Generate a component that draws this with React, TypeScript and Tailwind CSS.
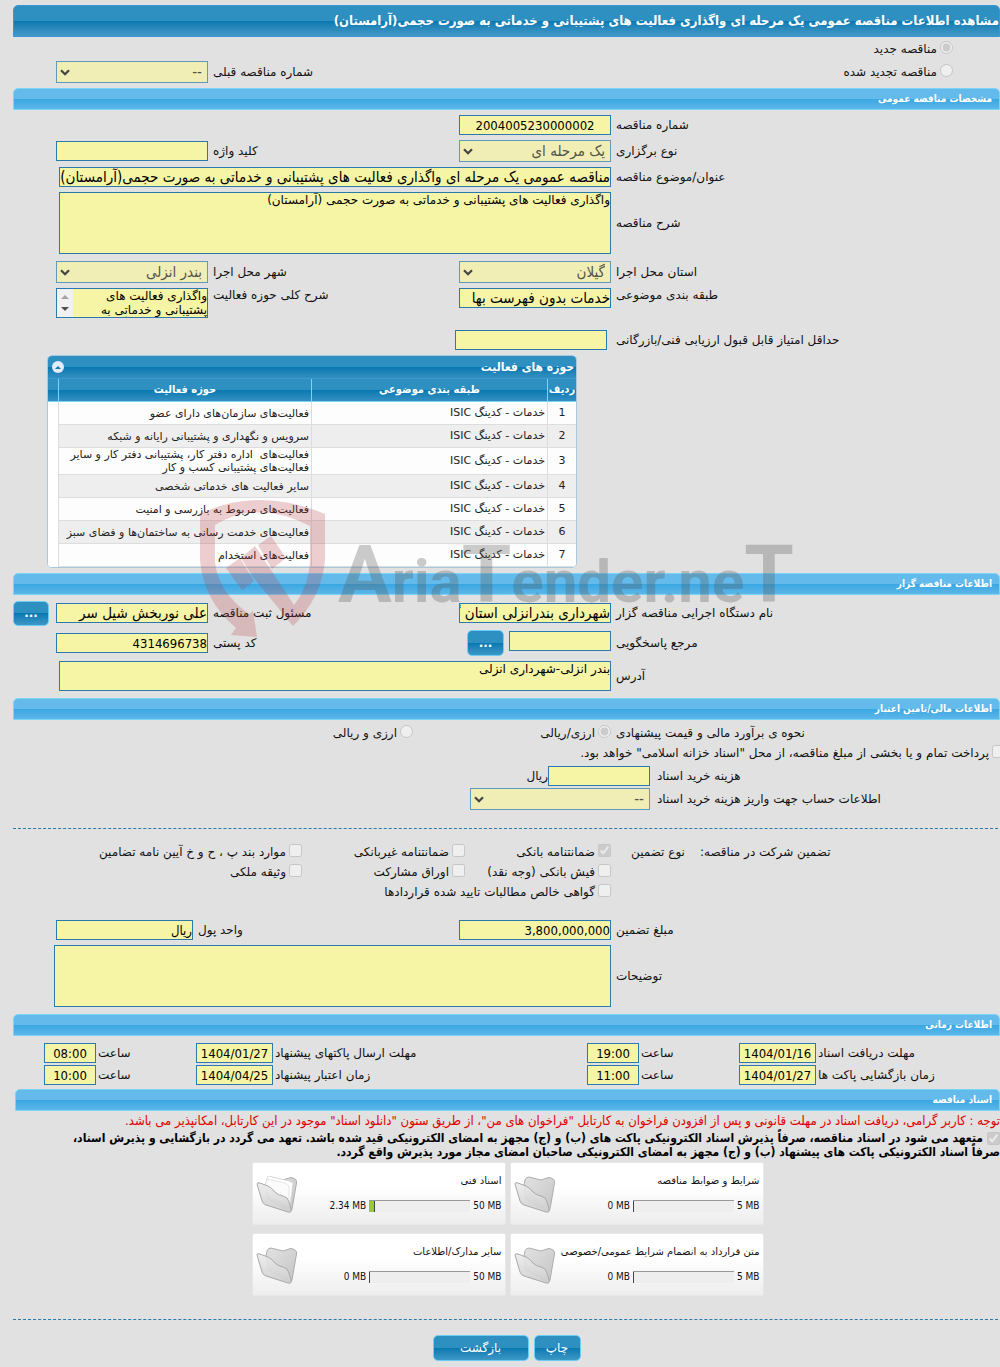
import { type ReactNode } from "react";
import clsx from "clsx";

const fieldBase = "block border border-[#2a7aab] bg-[#f6f4a5] text-black outline-none";

const formGrid = "grid grid-cols-[389fr_152px_251fr_152px_43px] items-center";

const timeGrid =
  "grid grid-cols-[184fr_77px_100px_52px_314fr_77px_100px_52px_31px] items-center";

const condensed = "font-['DejaVu_Sans_Condensed','DejaVu_Sans',sans-serif]";

const activities = [
  "فعالیت‌های سازمان‌های دارای عضو",
  "سرویس و نگهداری و پشتیبانی رایانه و شبکه",
  "فعالیت‌های  اداره دفتر کار، پشتیبانی دفتر کار و سایر فعالیت‌های پشتیبانی کسب و کار",
  "سایر فعالیت های خدماتی شخصی",
  "فعالیت‌های مربوط به بازرسی و امنیت",
  "فعالیت‌های خدمت رسانی به ساختمان‌ها و فضای سبز",
  "فعالیت‌های استخدام",
];

const times = [
  [
    { id: "docs", label: "مهلت دریافت اسناد", date: "1404/01/16", hour: "19:00" },
    { id: "send", label: "مهلت ارسال پاکتهای پیشنهاد", date: "1404/01/27", hour: "08:00" },
  ],
  [
    { id: "open", label: "زمان بازگشایی پاکت ها", date: "1404/01/27", hour: "11:00" },
    { id: "valid", label: "زمان اعتبار پیشنهاد", date: "1404/04/25", hour: "10:00" },
  ],
];

const folders = [
  { title: "شرایط و ضوابط مناقصه", used: 0, max: 5, full: false },
  { title: "اسناد فنی", used: 2.34, max: 50, full: true },
  { title: "متن قرارداد به انضمام شرایط عمومی/خصوصی", used: 0, max: 5, full: false },
  { title: "سایر مدارک/اطلاعات", used: 0, max: 50, full: false },
];

function Label({
  htmlFor,
  children,
  className = "pe-[5px]",
}: {
  htmlFor?: string;
  children: ReactNode;
  className?: string;
}) {
  return (
    <label htmlFor={htmlFor} className={clsx("block text-end whitespace-nowrap", className)}>
      {children}
    </label>
  );
}

function TextField({
  id,
  value = "",
  width = "w-full",
  size = "text-[13px]",
  className,
}: {
  id: string;
  value?: string;
  width?: string;
  size?: string;
  className?: string;
}) {
  return (
    <input
      id={id}
      type="text"
      readOnly
      value={value}
      className={clsx(fieldBase, condensed, "h-5", width, size, className)}
    />
  );
}

function SelectField({ id, value, className }: { id: string; value: string; className?: string }) {
  return (
    <div className={clsx("relative", className)}>
      <select
        id={id}
        disabled
        className={clsx(
          condensed,
          "block h-[22px] w-full appearance-none border border-[#5f9abb] bg-[#f0eeb4] ps-[5px] text-[15px] leading-5 text-[#54544a] opacity-100",
        )}
      >
        <option>{value}</option>
      </select>
      <svg viewBox="0 0 10 7" className="pointer-events-none absolute top-2 left-1 h-[7px] w-[10px]">
        <path d="M1 1.2 5 5.2 9 1.2" fill="none" stroke="#444" strokeWidth="2.2" />
      </svg>
    </div>
  );
}

function SectionBar({ children, className }: { children: ReactNode; className?: string }) {
  return (
    <h2
      className={clsx(
        condensed,
        "h-[22px] rounded-t-[5px] border border-[#7bd3f6] bg-linear-to-b from-[#64bbeb] from-50% via-[#38a7e2] via-50% to-[#5cb6e9] ps-[7px] text-[10px] leading-5 font-bold text-white",
        className,
      )}
    >
      {children}
    </h2>
  );
}

function BlueButton({ children, className }: { children: ReactNode; className?: string }) {
  return (
    <button
      type="button"
      className={clsx(
        "rounded-[5px] border border-[#6bcdf5] bg-linear-to-b from-[#2e90c0] from-50% via-[#0478b1] via-50% to-[#3b98c6] text-white",
        className,
      )}
    >
      {children}
    </button>
  );
}

function Divider({ className }: { className?: string }) {
  return <div role="separator" className={clsx("ms-[2px] border-t border-dashed border-[#2a7aab]", className)} />;
}

function Choice({
  type,
  name,
  checked = false,
  children,
  className,
}: {
  type: "radio" | "checkbox";
  name: string;
  checked?: boolean;
  children: ReactNode;
  className?: string;
}) {
  return (
    <label className={clsx("flex items-center gap-[3px] whitespace-nowrap", className)}>
      <input type={type} name={name} checked={checked} disabled readOnly className="mb-1 size-[13px] shrink-0" />
      {children}
    </label>
  );
}

function FolderIcon({ full }: { full: boolean }) {
  return (
    <svg viewBox="0 0 42 42" className="h-[42px] w-[42px]">
      <defs>
        <linearGradient id="folderBack" x1="0" y1="0" x2="1" y2="1">
          <stop offset="0" stopColor="#e2e2e2" />
          <stop offset="1" stopColor="#c4c4c4" />
        </linearGradient>
        <linearGradient id="folderFront" x1="0" y1="0" x2="0" y2="1">
          <stop offset="0" stopColor="#ececec" />
          <stop offset="1" stopColor="#cdcdcd" />
        </linearGradient>
      </defs>
      <path
        d="M10 14 11 9Q12 6 15 6L27 9 33 7Q35 6 37 7L39 8Q41 9 40.500 12L36 38Q35 41 33 40L12 28Z"
        fill="url(#folderBack)"
        stroke="#adadad"
        strokeWidth="1"
      />
      {full && (
        <>
          <path d="M10 12 12 5 33 10 37 12 34 34 14 28Z" fill="#fff" stroke="#d2d2d2" strokeWidth=".7" />
          <path d="M9 15 11 8 29 12 33 15 33 32 14 28Z" fill="#fbfbfb" stroke="#dcdcdc" strokeWidth=".7" />
        </>
      )}
      <path
        d="M1 13Q1 11 4 12L12 15Q16 17 19 21 22 24 27 25 32 26 33 31L35 38Q36 42 32 41L10 34Q7 33 6 30Z"
        fill="url(#folderFront)"
        fillOpacity=".9"
        stroke="#a9a9a9"
        strokeWidth="1"
      />
    </svg>
  );
}

function Watermark() {
  return (
    <div dir="ltr" aria-hidden className="pointer-events-none absolute top-[495px] left-[200px] flex">
      <svg viewBox="200 495 130 145" className="h-[145px] w-[130px] shrink-0" fill="#b8323e" fillOpacity=".23">
        <path d="M200 514Q258 486 325 514V560Q322 597 293 626L253 577 241 558 255 546 271 570 294 605Q309 586 310 560V526Q258 499 215 525V562Q218 592 249 614L253 611 257 637 231 635 236 628Q203 600 200 560Z" />
        <path d="M226 568 240 558 254 581 242 590ZM258 545 271 536 286 558 272 569Z" />
      </svg>
      <span className="mt-10 ml-2 font-[Roboto,sans-serif] text-[60px] leading-none font-bold whitespace-nowrap text-[#555]/30">
        <span className="text-[80px]">A</span>ria<span className="text-[80px]">T</span>ender.ne
        <span className="text-[80px]">T</span>
      </span>
    </div>
  );
}

function ActivityTable() {
  const headCell =
    "h-[23px] border-b border-[#7bd3f6] bg-linear-to-b from-[#2e90c0] from-50% via-[#0478b1] via-50% to-[#3190c1] font-bold text-white";
  const cell = "h-[23px] border-e border-b border-[#ddd] px-[2px] py-0";

  return (
    <section className="ms-auto me-[34px] mt-[5px] w-[530px] overflow-hidden rounded-[5px] border border-[#a6c9e2] bg-white text-[11px]">
      <div
        className={clsx(
          condensed,
          "flex h-[22px] items-center justify-between bg-linear-to-b from-[#2e90c0] from-50% via-[#0478b1] via-50% to-[#3190c1] ps-[2px] pe-1 text-[12px] font-bold text-white",
        )}
      >
        <h3>حوزه های فعالیت</h3>
        <button type="button" aria-label="بستن" className="grid size-3 place-items-center rounded-full bg-[#e2ecf8]">
          <svg viewBox="0 0 6 3" className="h-[3px] w-[6px]">
            <path d="M0 3 3 0 6 3Z" fill="#1c75a8" />
          </svg>
        </button>
      </div>
      <table className="w-full table-fixed border-separate border-spacing-0 border-t border-[#3d9ad0]">
        <colgroup>
          <col className="w-[29px]" />
          <col className="w-[236px]" />
          <col />
          <col className="w-[10px]" />
        </colgroup>
        <thead className={condensed}>
          <tr>
            <th className={clsx(headCell, "border-e p-0")}>ردیف</th>
            <th className={clsx(headCell, "border-e")}>طبقه بندی موضوعی</th>
            <th className={clsx(headCell, "border-e")}>حوزه فعالیت</th>
            <th className={headCell} />
          </tr>
        </thead>
        <tbody className="text-[#222]">
          {activities.map((name, i) => (
            <tr key={name} className="odd:bg-[#fdfdfd] even:bg-[#eee]">
              <td className={clsx(cell, "text-center")}>{i + 1}</td>
              <td className={cell}>خدمات - کدینگ ISIC</td>
              <td className={clsx(cell, "leading-[13px] whitespace-pre-wrap")}>{name}</td>
              <td className="bg-white" />
            </tr>
          ))}
        </tbody>
      </table>
    </section>
  );
}

function FolderCard({ title, used, max, full }: (typeof folders)[number]) {
  return (
    <div className="flex h-[63px] flex-row-reverse rounded-[2px] border border-[#e8e8e8] bg-linear-to-b from-white from-40% to-[#ededed] text-[10px]">
      <div className="pe-[3px] pt-2">
        <FolderIcon full={full} />
      </div>
      <div className="flex-1 ps-[3px]">
        <p className="mt-[10px] h-[15px] leading-[15px] whitespace-nowrap">{title}</p>
        <div className={clsx(condensed, "mt-[11px] flex items-center gap-[3px] whitespace-nowrap")}>
          <span dir="ltr">{max} MB</span>
          <div dir="ltr" className="flex h-3 w-[101px] border-t border-[#999] bg-[#eee]">
            <div className="bg-[#9aca33]" style={{ width: `${(used / max) * 100}%` }} />
            <div className="w-px bg-[#444]" />
          </div>
          <span dir="ltr">{used} MB</span>
        </div>
      </div>
    </div>
  );
}

export default function App() {
  return (
    <div
      dir="rtl"
      className="relative min-h-screen overflow-hidden bg-[#e1e1e1] pt-[5px] pb-[5px] pe-[13px] font-['DejaVu_Sans',sans-serif] text-[12px] leading-[14px] text-[#111]"
    >
      <h1
        className={clsx(
          condensed,
          "h-8 overflow-hidden rounded-t-[5px] border border-[#3796d8] bg-linear-to-b from-[#2e90c0] from-50% via-[#0478b1] via-50% to-[#429bc7] text-[13px] leading-[30px] font-bold whitespace-nowrap text-white",
        )}
      >
        مشاهده اطلاعات مناقصه عمومی یک مرحله ای واگذاری فعالیت های پشتیبانی و خدماتی به صورت حجمی(آرامستان)
      </h1>

      <Choice type="radio" name="kind" checked className="h-6 ps-[47px]">
        مناقصه جدید
      </Choice>
      <div className={clsx(formGrid, "h-[22px]")}>
        <Choice type="radio" name="kind" className="ps-[47px]">
          مناقصه تجدید شده
        </Choice>
        <span />
        <Label htmlFor="prev">شماره مناقصه قبلی</Label>
        <SelectField id="prev" value="--" />
      </div>

      <SectionBar className="mt-[5px]">مشخصات مناقصه عمومی</SectionBar>
      <div className={clsx(formGrid, "mt-[5px] gap-y-[5px]")}>
        <Label htmlFor="number">شماره مناقصه</Label>
        <TextField id="number" value="2004005230000002" className="text-center" />
        <span className="col-span-3" />

        <Label htmlFor="method">نوع برگزاری</Label>
        <SelectField id="method" value="یک مرحله ای" />
        <Label htmlFor="keyword">کلید واژه</Label>
        <TextField id="keyword" />
        <span />

        <Label htmlFor="subject">عنوان/موضوع مناقصه</Label>
        <div className="col-span-3 me-[3px]">
          <TextField
            id="subject"
            size="text-[15px]"
            value="مناقصه عمومی یک مرحله ای واگذاری فعالیت های پشتیبانی و خدماتی به صورت حجمی(آرامستان)"
          />
        </div>
        <span />

        <Label htmlFor="description">شرح مناقصه</Label>
        <div className="col-span-3 me-[3px]">
          <textarea
            id="description"
            readOnly
            className={clsx(fieldBase, "h-[62px] w-full resize-none")}
            value="واگذاری فعالیت های پشتیبانی و خدماتی به صورت حجمی (آرامستان)"
          />
        </div>
      </div>
      <div className={clsx(formGrid, "mt-[7px]")}>
        <Label htmlFor="province">استان محل اجرا</Label>
        <SelectField id="province" value="گیلان" />
        <Label htmlFor="city">شهر محل اجرا</Label>
        <SelectField id="city" value="بندر انزلی" />
      </div>
      <div className="mt-[5px] grid grid-cols-[389fr_152px_251fr_152px_43px] items-start">
        <Label htmlFor="category">طبقه بندی موضوعی</Label>
        <TextField id="category" size="text-[15px]" value="خدمات بدون فهرست بها" />
        <Label htmlFor="scope">شرح کلی حوزه فعالیت</Label>
        <div className="relative">
          <textarea
            id="scope"
            readOnly
            className={clsx(fieldBase, "h-[30px] w-full resize-none overflow-hidden pe-[17px]")}
            value="واگذاری فعالیت های پشتیبانی و خدماتی به صورت حجمی (آرامستان)"
          />
          <div className="absolute inset-y-px left-px flex w-4 flex-col items-center justify-between bg-[#f1f1f1] py-[6px]">
            <svg viewBox="0 0 8 4" className="h-1 w-2"><path d="M0 4 4 0 8 4Z" fill="#a3a3a3" /></svg>
            <svg viewBox="0 0 8 4" className="h-1 w-2"><path d="M0 0 4 4 8 0Z" fill="#505050" /></svg>
          </div>
        </div>
      </div>
      <div className={clsx(formGrid, "mt-3")}>
        <Label htmlFor="score">حداقل امتیاز قابل قبول ارزیابی فنی/بازرگانی</Label>
        <div className="ms-1 -me-1">
          <TextField id="score" />
        </div>
      </div>

      <ActivityTable />

      <SectionBar className="mt-[5px]">اطلاعات مناقصه گزار</SectionBar>
      <div className={clsx(formGrid, "mt-[5px] h-[26px]")}>
        <Label htmlFor="org">نام دستگاه اجرایی مناقصه گزار</Label>
        <TextField id="org" size="text-[15px]" value="شهرداری بندرانزلی استان گیلان" />
        <Label htmlFor="registrar">مسئول ثبت مناقصه</Label>
        <TextField id="registrar" size="text-[15px]" value="علی نوربخش شیل سر" />
        <BlueButton className="ms-[7px] h-[25px] font-bold">...</BlueButton>
      </div>
      <div className={clsx(formGrid, "mt-1 h-[26px]")}>
        <Label htmlFor="contact">مرجع پاسخگویی</Label>
        <div className="flex items-start gap-[5px]">
          <TextField id="contact" width="w-[102px]" className="mt-px" />
          <BlueButton className="h-[26px] w-[37px] shrink-0 font-bold">...</BlueButton>
        </div>
        <Label htmlFor="postal">کد پستی</Label>
        <TextField id="postal" value="4314696738" />
      </div>
      <div className={clsx(formGrid, "mt-[5px]")}>
        <Label htmlFor="address">آدرس</Label>
        <div className="col-span-3 me-[3px]">
          <textarea
            id="address"
            readOnly
            className={clsx(fieldBase, "h-[30px] w-full resize-none")}
            value="بندر انزلی-شهرداری انزلی"
          />
        </div>
      </div>

      <SectionBar className="mt-[7px]">اطلاعات مالی/تامین اعتبار</SectionBar>
      <div className="mt-[3px] grid h-5 grid-cols-[389fr_198px_400fr] items-center">
        <span className="pe-[5px] text-end">نحوه ی برآورد مالی و قیمت پیشنهادی</span>
        <Choice type="radio" name="currency" checked>ارزی/ریالی</Choice>
        <Choice type="radio" name="currency">ارزی و ریالی</Choice>
      </div>
      <Choice type="checkbox" name="treasury" className="-ms-[5px] h-5">
        پرداخت تمام و یا بخشی از مبلغ مناقصه، از محل "اسناد خزانه اسلامی" خواهد بود.
      </Choice>
      <div className="mt-[3px] grid grid-cols-[350fr_102px_78px_457fr] items-center gap-y-[2px]">
        <Label htmlFor="price" className="pe-[7px]">هزینه خرید اسناد</Label>
        <TextField id="price" />
        <span>ریال</span>
        <span />
        <Label htmlFor="account" className="pe-[7px]">اطلاعات حساب جهت واریز هزینه خرید اسناد</Label>
        <SelectField id="account" value="--" className="col-span-2" />
      </div>

      <Divider className="mt-[18px]" />

      <div className="mt-[13px] grid grid-cols-[389fr_146px_163px_289fr] items-center">
        <div className="flex h-5 items-center justify-end gap-[15px] pe-5">
          <span>تضمین شرکت در مناقصه:</span>
          <span>نوع تضمین</span>
        </div>
        <Choice type="checkbox" name="bank" checked>ضمانتنامه بانکی</Choice>
        <Choice type="checkbox" name="nonbank">ضمانتنامه غیربانکی</Choice>
        <Choice type="checkbox" name="bylaw">موارد بند پ ، ح و خ آیین نامه تضامین</Choice>
        <span className="h-5" />
        <Choice type="checkbox" name="cash">فیش بانکی (وجه نقد)</Choice>
        <Choice type="checkbox" name="bonds">اوراق مشارکت</Choice>
        <Choice type="checkbox" name="property">وثیقه ملکی</Choice>
        <span className="h-5" />
        <Choice type="checkbox" name="claims" className="col-span-3">
          گواهی خالص مطالبات تایید شده قراردادها
        </Choice>
      </div>

      <div className="mt-[18px] grid grid-cols-[389fr_152px_266fr_137px_43px] items-center gap-y-[5px]">
        <Label htmlFor="amount">مبلغ تضمین</Label>
        <TextField id="amount" value="3,800,000,000" />
        <Label htmlFor="unit">واحد پول</Label>
        <TextField id="unit" value="ریال" />
        <span />
        <Label htmlFor="notes">توضیحات</Label>
        <div className="col-span-3 -me-[2px]">
          <textarea id="notes" readOnly className={clsx(fieldBase, "h-[62px] w-full resize-none")} value="" />
        </div>
      </div>

      <SectionBar className="mt-[7px]">اطلاعات زمانی</SectionBar>
      <div className="mt-[7px] flex flex-col gap-[2px]">
        {times.map((row) => (
          <div key={row[0].id} className={timeGrid}>
            {row.map((t) => (
              <div key={t.id} className="contents">
                <Label htmlFor={t.id} className="pe-[2px]">{t.label}</Label>
                <TextField id={t.id} value={t.date} className="text-center" />
                <Label htmlFor={`${t.id}-hour`} className="pe-[2px]">ساعت</Label>
                <TextField id={`${t.id}-hour`} value={t.hour} className="text-center" />
              </div>
            ))}
          </div>
        ))}
      </div>

      <SectionBar className="me-[2px] mt-1">اسناد مناقصه</SectionBar>
      <p className={clsx(condensed, "-me-[13px] mt-[3px] text-[13px] leading-[14px] text-[#e00000]")}>
        توجه : کاربر گرامی، دریافت اسناد در مهلت قانونی و پس از افزودن فراخوان به کارتابل "فراخوان های من"، از طریق ستون "دانلود اسناد" موجود در این کارتابل، امکانپذیر می باشد.
      </p>
      <label className={clsx(condensed, "-me-[13px] mt-[3px] block text-[12px] leading-[14px] font-bold text-black")}>
        <input type="checkbox" checked disabled readOnly className="me-1 size-[13px] align-middle" />
        متعهد می شود در اسناد مناقصه، صرفاً پذیرش اسناد الکترونیکی پاکت های (ب) و (ج) مجهز به امضای الکترونیکی قید شده باشد. تعهد می گردد در بازگشایی و پذیرش اسناد،
        <br />
        صرفاً اسناد الکترونیکی پاکت های پیشنهاد (ب) و (ج) مجهز به امضای الکترونیکی صاحبان امضای مجاز مورد پذیرش واقع گردد.
      </label>

      <div className="me-[2px] mt-[3px] grid grid-cols-[254px_254px] justify-center gap-x-1 gap-y-2">
        {folders.map((f) => (
          <FolderCard key={f.title} {...f} />
        ))}
      </div>

      <Divider className="mt-[23px]" />
      <div className="mt-[15px] flex justify-center gap-[5px]">
        <BlueButton className="h-[26px] w-[47px]">چاپ</BlueButton>
        <BlueButton className="h-[26px] w-24">بازگشت</BlueButton>
      </div>

      <Watermark />
    </div>
  );
}
